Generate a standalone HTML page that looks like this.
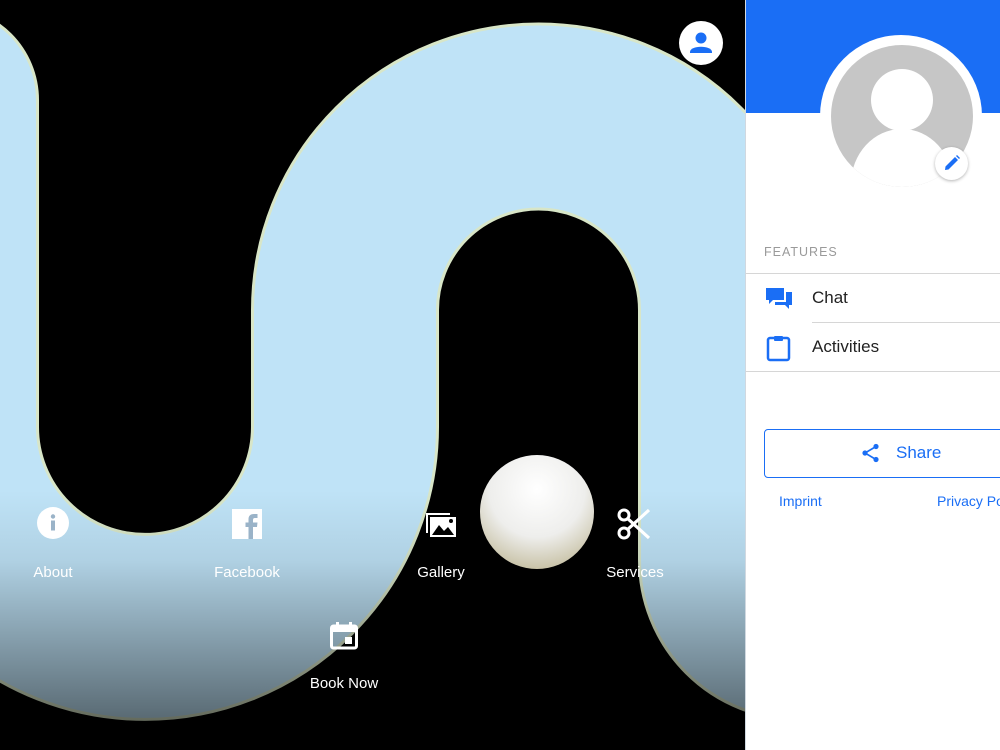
<!DOCTYPE html>
<html><head><meta charset="utf-8"><style>
*{margin:0;padding:0;box-sizing:border-box}
body{width:1000px;height:750px;overflow:hidden;background:#fff;font-family:"Liberation Sans",sans-serif;position:relative}
#bg{position:absolute;left:0;top:0;width:745px;height:750px;background:#000;overflow:hidden}
.lbl{position:absolute;color:#fff;font-size:15px;width:120px;text-align:center;transform:translateX(-60px)}
.ic{position:absolute}
#panel{position:absolute;left:745px;top:0;width:255px;height:750px;background:#fff;border-left:1px solid #d0d8e0}
</style></head><body>
<div id="bg">
<svg width="745" height="750" style="position:absolute;left:0;top:0">
<defs>
<linearGradient id="ov" x1="0" y1="0" x2="0" y2="1">
<stop offset="0" stop-color="#000" stop-opacity="0"/>
<stop offset="0.3" stop-color="#000" stop-opacity="0.08"/>
<stop offset="1" stop-color="#000" stop-opacity="0.55"/>
</linearGradient>
<radialGradient id="ball" cx="0.5" cy="0.3" r="0.7">
<stop offset="0" stop-color="#ffffff"/><stop offset="0.6" stop-color="#eeeeec"/><stop offset="1" stop-color="#c9c3a8"/>
</radialGradient>
</defs>
<path d="M -55 100 L -55 427 A 200 200 0 0 0 345 427 L 345 310 A 193.5 193.5 0 0 1 732 310 L 732 560 A 67 67 0 0 0 799 627 L 1100 627" fill="none" stroke="#d8e6c8" stroke-width="188" stroke-linecap="round"/>
<path d="M -55 100 L -55 427 A 200 200 0 0 0 345 427 L 345 310 A 193.5 193.5 0 0 1 732 310 L 732 560 A 67 67 0 0 0 799 627 L 1100 627" fill="none" stroke="#bfe3f7" stroke-width="182" stroke-linecap="round"/>
<rect x="0" y="490" width="745" height="235" fill="url(#ov)"/>
<rect x="0" y="722" width="745" height="28" fill="#000"/>
<circle cx="537" cy="512" r="57" fill="url(#ball)"/>
</svg>
<div style="position:absolute;left:679px;top:21px;width:44px;height:44px;border-radius:50%;background:#fff">
<svg width="44" height="44" viewBox="0 0 44 44"><circle cx="22" cy="17" r="5.5" fill="#1a6ef5"/><path d="M11 31 C11 24 33 24 33 31 L33 32 L11 32Z" fill="#1a6ef5"/></svg></div>
<svg class="ic" style="left:37px;top:507px" width="32" height="32" viewBox="0 0 32 32"><circle cx="16" cy="16" r="16" fill="#fff"/><circle cx="16" cy="9.5" r="2.2" fill="#9ab3c8"/><rect x="14" y="13.5" width="4" height="10" fill="#9ab3c8"/></svg>
<svg class="ic" style="left:232px;top:509px" width="30" height="30" viewBox="0 0 30 30"><rect width="30" height="30" fill="#fff"/><path d="M21 30 V18 H25 L25.5 13.5 H21 V11 C21 9.6 21.5 9 23 9 H25.5 V5 H22 C18 5 16.5 7 16.5 10.5 V13.5 H13.5 V18 H16.5 V30Z" fill="#9ab3c8"/></svg>
<svg class="ic" style="left:424px;top:509px" width="34" height="30" viewBox="0 0 34 30"><path d="M2 4 H26 V6 H4 V24 H2Z" fill="#fff"/><rect x="6" y="8" width="26" height="20" fill="#fff"/><path d="M8 26 L15 16 L20 22 L24 18 L30 26Z" fill="#000"/><circle cx="27" cy="12" r="2" fill="#000"/></svg>
<svg class="ic" style="left:617px;top:507px" width="34" height="34" viewBox="0 0 34 34"><circle cx="7" cy="8" r="5" fill="none" stroke="#fff" stroke-width="3"/><circle cx="7" cy="26" r="5" fill="none" stroke="#fff" stroke-width="3"/><path d="M10 11 L32 31 M10 23 L32 3" stroke="#fff" stroke-width="3.2"/></svg>
<svg class="ic" style="left:329px;top:621px" width="30" height="30" viewBox="0 0 30 30"><rect x="2.5" y="5" width="25" height="22" rx="2" fill="none" stroke="#fff" stroke-width="3"/><rect x="2.5" y="5" width="25" height="6" fill="#fff"/><rect x="7" y="1" width="3" height="6" fill="#fff"/><rect x="20" y="1" width="3" height="6" fill="#fff"/><rect x="16" y="16" width="7" height="7" fill="#fff"/></svg>
<div class="lbl" style="left:53px;top:564px">About</div>
<div class="lbl" style="left:247px;top:564px">Facebook</div>
<div class="lbl" style="left:441px;top:564px">Gallery</div>
<div class="lbl" style="left:635px;top:564px">Services</div>
<div class="lbl" style="left:344px;top:675px">Book Now</div>
</div>
<div id="panel">
<div style="position:absolute;left:0;top:0;width:255px;height:113px;background:#1a6ef5"></div>
<div style="position:absolute;left:74px;top:35px;width:162px;height:162px;border-radius:50%;background:#fff"></div>
<div style="position:absolute;left:85px;top:45px;width:142px;height:142px;border-radius:50%;background:#c6c6c6;overflow:hidden">
<div style="position:absolute;left:40px;top:24px;width:62px;height:62px;border-radius:50%;background:#fff"></div>
<div style="position:absolute;left:20px;top:84px;width:102px;height:110px;border-radius:50%;background:#fff"></div>
</div>
<div style="position:absolute;left:189px;top:147px;width:33px;height:33px;border-radius:50%;background:#fff;box-shadow:0 1px 3px rgba(0,0,0,.3)">
<svg width="33" height="33" viewBox="0 0 33 33"><path d="M10 23 L10.5 19.5 L20 10 L23 13 L13.5 22.5Z" fill="#1a6ef5"/><path d="M21 9 L22 8 L25 11 L24 12Z" fill="#1a6ef5"/></svg></div>
<div style="position:absolute;left:18px;top:245px;font-size:12.5px;color:#9a9a9a;letter-spacing:1px">FEATURES</div>
<div style="position:absolute;left:0;top:273px;width:255px;height:1px;background:#d6d6d6"></div>
<svg style="position:absolute;left:20px;top:286px" width="27" height="25" viewBox="0 0 27 25"><path d="M0 2 H18 V14 H7 L3 18 V14 H0Z" fill="#1a6ef5"/><path d="M20 6 H26 V19 H23 V23 L19 19 H9 V16 H20Z" fill="#1a6ef5"/></svg>
<div style="position:absolute;left:66px;top:288px;font-size:17px;color:#222">Chat</div>
<div style="position:absolute;left:66px;top:322px;width:189px;height:1px;background:#d6d6d6"></div>
<svg style="position:absolute;left:20px;top:334px" width="26" height="28" viewBox="0 0 26 28"><rect x="2" y="4" width="21" height="22" rx="2" fill="none" stroke="#1a6ef5" stroke-width="2.5"/><rect x="8" y="2" width="9" height="5" rx="1" fill="#1a6ef5"/></svg>
<div style="position:absolute;left:66px;top:337px;font-size:17px;color:#222">Activities</div>
<div style="position:absolute;left:0;top:371px;width:255px;height:1px;background:#d6d6d6"></div>
<div style="position:absolute;left:18px;top:429px;width:250px;height:49px;border:1px solid #1a6ef5;border-radius:4px"></div>
<svg style="position:absolute;left:115px;top:443px" width="20" height="20" viewBox="0 0 20 20"><circle cx="15" cy="3.5" r="2.6" fill="#1a6ef5"/><circle cx="4" cy="10" r="2.6" fill="#1a6ef5"/><circle cx="15" cy="16.5" r="2.6" fill="#1a6ef5"/><path d="M15 3.5 L4 10 L15 16.5" fill="none" stroke="#1a6ef5" stroke-width="1.6"/></svg>
<div style="position:absolute;left:150px;top:443px;font-size:17px;color:#1a6ef5">Share</div>
<div style="position:absolute;left:33px;top:493px;font-size:14px;color:#1a6ef5">Imprint</div>
<div style="position:absolute;left:191px;top:493px;font-size:14px;color:#1a6ef5;white-space:nowrap">Privacy Policy</div>
</div>
</body></html>
